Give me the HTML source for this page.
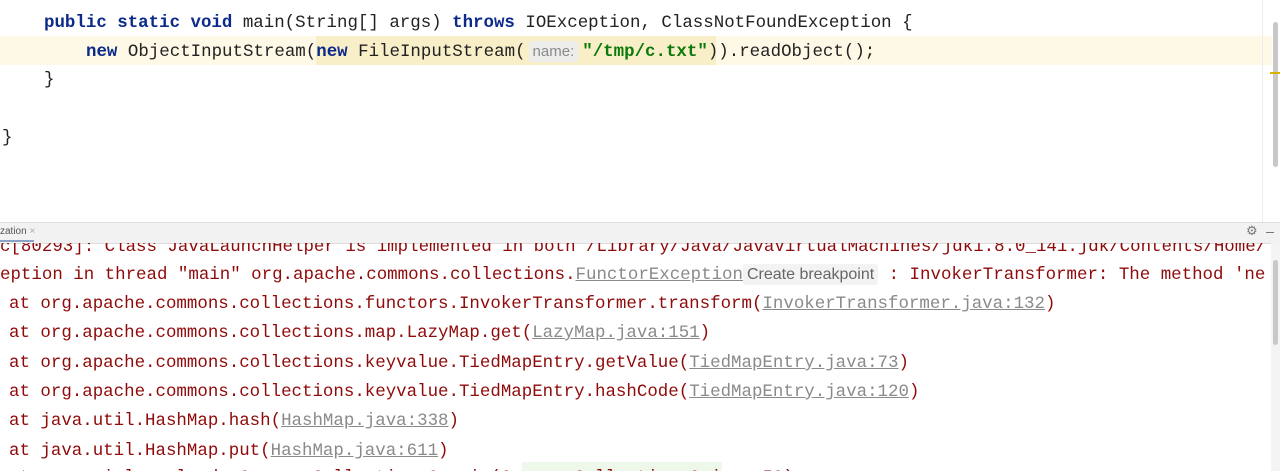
<!DOCTYPE html>
<html><head><meta charset="utf-8"><style>
*{margin:0;padding:0}
body{width:1280px;height:471px;overflow:hidden;background:#fff;position:relative;font-family:"Liberation Mono","DejaVu Sans Mono",monospace;}
.l{position:absolute;white-space:pre;font-size:17.45px;line-height:20px;}
.kw{color:#0c2a8a;font-weight:bold}
.c{color:#222}
.s{color:#0b7a0b;font-weight:bold}
.r{color:#8f0a0a}
.u{color:#8a8a8a;text-decoration:underline}
.hint{background:#ededeb;color:#8a8a8a;font-family:"Liberation Sans",sans-serif;font-size:15px;padding:2px 4px;border-radius:3px}
</style></head><body>
<div style="position:absolute;left:0;top:36px;width:1272px;height:29px;background:#fdf9e6"></div>
<div style="position:absolute;left:316px;top:36px;width:400px;height:29px;background:#f8efc8"></div>
<div style="position:absolute;left:1262px;top:0;width:1px;height:222px;background:#ececec"></div>
<div style="position:absolute;left:1273px;top:22px;width:5px;height:145px;background:#c8c8c8;border-radius:3px"></div>
<div style="position:absolute;left:1270px;top:72px;width:10px;height:2px;background:#d6b400"></div>
<div class="l c" style="left:44px;top:13px"><span class="kw">public static void</span> main(String[] args) <span class="kw">throws</span> IOException, ClassNotFoundException {</div>
<div class="l c" style="left:86px;top:42px"><span class="kw">new</span> ObjectInputStream(<span class="kw">new</span> FileInputStream(<span class="hint" style="margin-left:3px;margin-right:4px">name:</span><span class="s">"/tmp/c.txt"</span>)).readObject();</div>
<div class="l c" style="left:44px;top:70px">}</div>
<div class="l c" style="left:2px;top:128px">}</div>
<div style="position:absolute;left:0;top:222px;width:1280px;height:20px;background:#f2f2f2;border-top:1px solid #dcdcdc;border-bottom:1px solid #dcdcdc"></div>
<div style="position:absolute;left:0;top:226px;font-family:'Liberation Sans',sans-serif;font-size:10px;color:#555">zation <span style="color:#aaa">×</span></div>
<div style="position:absolute;left:0;top:240px;width:34px;height:2px;background:#8aa2c8"></div>
<div style="position:absolute;left:1246px;top:224px;font-size:13px;color:#777;font-family:'DejaVu Sans',sans-serif">⚙</div>
<div style="position:absolute;left:1266px;top:232px;width:8px;height:1px;background:#777"></div>
<div style="position:absolute;left:1271px;top:243px;width:9px;height:228px;background:#f4f4f4"></div>
<div style="position:absolute;left:1273px;top:260px;width:5px;height:85px;background:#c8c8c8;border-radius:3px"></div>
<div style="position:absolute;left:0;top:243px;width:1270px;height:228px;overflow:hidden">
<div class="l r" style="left:0;top:-6px">c[80293]: Class JavaLaunchHelper is implemented in both /Library/Java/JavaVirtualMachines/jdk1.8.0_141.jdk/Contents/Home/</div>
<div class="l r" style="left:0;top:22px">eption in thread "main" org.apache.commons.collections.<span class="u">FunctorException</span><span class="hint" style="background:#f3f3f3;color:#666;font-size:16px">Create breakpoint</span> : InvokerTransformer: The method 'ne</div>
<div class="l r" style="left:9px;top:51px">at org.apache.commons.collections.functors.InvokerTransformer.transform(<span class="u">InvokerTransformer.java:132</span>)</div>
<div class="l r" style="left:9px;top:80px">at org.apache.commons.collections.map.LazyMap.get(<span class="u">LazyMap.java:151</span>)</div>
<div class="l r" style="left:9px;top:110px">at org.apache.commons.collections.keyvalue.TiedMapEntry.getValue(<span class="u">TiedMapEntry.java:73</span>)</div>
<div class="l r" style="left:9px;top:139px">at org.apache.commons.collections.keyvalue.TiedMapEntry.hashCode(<span class="u">TiedMapEntry.java:120</span>)</div>
<div class="l r" style="left:9px;top:168px">at java.util.HashMap.hash(<span class="u">HashMap.java:338</span>)</div>
<div class="l r" style="left:9px;top:198px">at java.util.HashMap.put(<span class="u">HashMap.java:611</span>)</div>
<div style="position:absolute;left:522px;top:219px;width:200px;height:20px;background:#eef8ea"></div>
<div class="l r" style="left:9px;top:225px">at ysoserial.payloads.CommonsCollections6.main(CommonsCollections6.java:58)</div>
</div>
</body></html>
